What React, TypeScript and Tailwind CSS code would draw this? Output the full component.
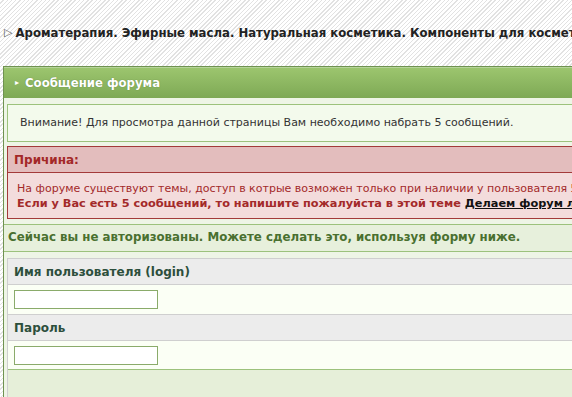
import React from "react";

export default function App() {
  const font = "font-['DejaVu_Sans',Verdana,sans-serif]";
  const cond = "font-['DejaVu_Sans_Condensed','DejaVu_Sans',Tahoma,sans-serif]";
  return (
    <div className={`w-[572px] h-[397px] overflow-hidden bg-[repeating-linear-gradient(135deg,#ffffff_0px,#ffffff_2px,#e2e2e2_2px,#e2e2e2_3px)] ${font}`}>
      <div className="h-[66px] flex items-center pl-[4px] pt-[0px]">
        <span className="text-[11px] text-[#555] mr-[3px]">▷</span>
        <span className={`whitespace-nowrap text-[13px] font-bold text-[#222] ${cond}`}>
          Ароматерапия. Эфирные масла. Натуральная косметика. Компоненты для косметики
        </span>
      </div>
      <div className="ml-[3px] w-[720px] border border-[#6f9250] bg-[#eef5e6]">
        <div className="h-[31px] flex items-center border-t border-[#b6d49a] bg-[linear-gradient(#9cc56e,#7ea955)] pl-[11px]">
          <span className="text-[8px] text-white mr-[6px]">▸</span>
          <span className={`text-[13px] font-bold text-white [text-shadow:0_0_1px_#5a7a3a] ${cond}`}>Сообщение форума</span>
        </div>
        <div className="px-[3px] pt-[6px] pb-[5px] flex flex-col gap-[4px]">
          <div className="h-[38px] flex items-center pl-[12px] border border-[#9cc27c] bg-[#f3faec] text-[11px] text-[#333] whitespace-nowrap">
            Внимание! Для просмотра данной страницы Вам необходимо набрать 5 сообщений.
          </div>
          <div className="border border-[#a33a3a] bg-[#f3dcdc]">
            <div className="h-[26px] flex items-center pl-[6px] bg-[#e3bdbd] border-b border-[#a33a3a] text-[12px] font-bold text-[#a32828]">
              Причина:
            </div>
            <div className="pl-[9px] pt-[8px] pb-[7px] text-[11px] text-[#a32a2a] leading-[15px] whitespace-nowrap">
              <div>На форуме существуют темы, доступ в котрые возможен только при наличии у пользователя 5 сообщений.</div>
              <div className="font-bold text-[11.3px]">
                Если у Вас есть 5 сообщений, то напишите пожалуйста в этой теме{" "}
                <span className="text-[#111] underline">Делаем форум лучше</span>
              </div>
            </div>
          </div>
        </div>
        <div className="h-[28px] flex items-center pl-[4px] border-t border-b border-[#9cc27c] bg-[#e7f0dc] text-[11.8px] font-bold text-[#4a7030] whitespace-nowrap">
          Сейчас вы не авторизованы. Можете сделать это, используя форму ниже.
        </div>
        <div className="pt-[6px] pl-[3px]">
          <div className="border-t border-l border-[#cfcfcf] bg-[#fbfff5]">
            <div className="h-[26px] flex items-center pl-[6px] bg-[#ececec] border-b border-[#cfcfcf] text-[12px] font-bold text-[#2d4f3c]">
              Имя пользователя (login)
            </div>
            <div className="h-[30px] flex items-center pl-[6px] border-b border-[#cfcfcf]">
              <div className="w-[144px] h-[19px] border border-[#8aab6a] bg-white" />
            </div>
            <div className="h-[26px] flex items-center pl-[6px] bg-[#ececec] border-b border-[#cfcfcf] text-[12px] font-bold text-[#2d4f3c]">
              Пароль
            </div>
            <div className="h-[29px] flex items-center pl-[6px] border-b border-[#9cc27c]">
              <div className="w-[144px] h-[19px] border border-[#8aab6a] bg-white" />
            </div>
            <div className="h-[40px] bg-[#e6efd9]" />
          </div>
        </div>
      </div>
    </div>
  );
}
